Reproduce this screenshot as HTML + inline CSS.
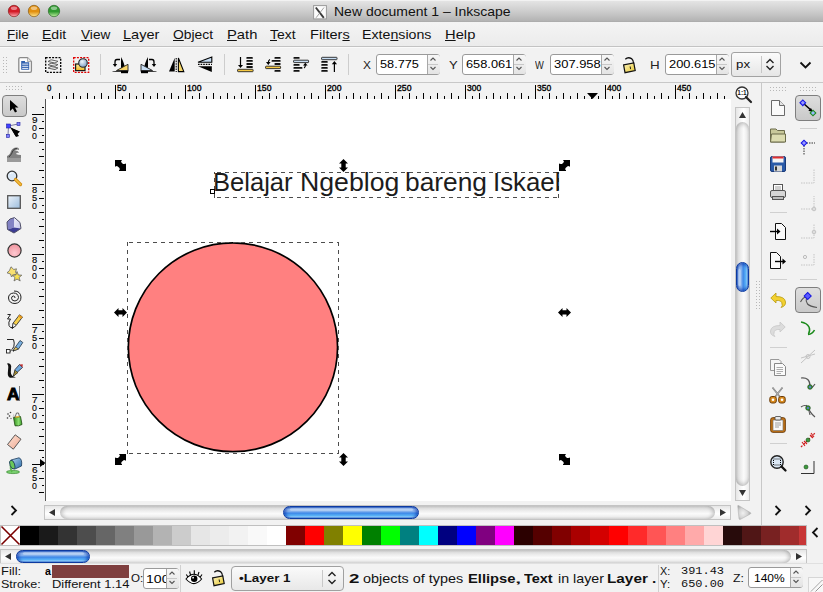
<!DOCTYPE html><html><head><meta charset="utf-8"><style>
html,body{margin:0;padding:0;}body{width:823px;height:592px;overflow:hidden;position:relative;background:#f2f2f2;font-family:"Liberation Sans",sans-serif;}
.t{position:absolute;white-space:pre;line-height:0;transform-origin:0 0;}
svg{overflow:visible}
</style></head><body>
<div style="position:absolute;left:0px;top:0px;width:823px;height:22px;background:linear-gradient(#e6e6e6 0%,#dadada 25%,#c8c8c8 60%,#b6b6b6 90%,#b0b0b0 100%);"></div>
<div style="position:absolute;left:0px;top:0px;width:823px;height:1px;background:#f2f2f2;"></div>
<div style="position:absolute;left:0px;top:21px;width:823px;height:1px;background:#adadad;"></div>
<svg style="position:absolute;left:7px;top:3.5px" width="14" height="14" viewBox="0 0 14 14"><defs><linearGradient id="gd41c28" x1="0" y1="0" x2="0" y2="1"><stop offset="0" stop-color="#d41c28"/><stop offset="0.55" stop-color="#d41c28"/><stop offset="1" stop-color="#ffb0b8"/></linearGradient></defs><circle cx="7" cy="7" r="5.7" fill="url(#gd41c28)" stroke="#8a1a1a" stroke-width="0.7"/><ellipse cx="7" cy="4.2" rx="3.2" ry="1.8" fill="#fff" opacity="0.45"/></svg>
<svg style="position:absolute;left:27px;top:3.5px" width="14" height="14" viewBox="0 0 14 14"><defs><linearGradient id="ge29010" x1="0" y1="0" x2="0" y2="1"><stop offset="0" stop-color="#e29010"/><stop offset="0.55" stop-color="#e29010"/><stop offset="1" stop-color="#ffe890"/></linearGradient></defs><circle cx="7" cy="7" r="5.7" fill="url(#ge29010)" stroke="#8a5a10" stroke-width="0.7"/><ellipse cx="7" cy="4.2" rx="3.2" ry="1.8" fill="#fff" opacity="0.45"/></svg>
<svg style="position:absolute;left:46.5px;top:3.5px" width="14" height="14" viewBox="0 0 14 14"><defs><linearGradient id="g2f9a2f" x1="0" y1="0" x2="0" y2="1"><stop offset="0" stop-color="#2f9a2f"/><stop offset="0.55" stop-color="#2f9a2f"/><stop offset="1" stop-color="#c0f0a0"/></linearGradient></defs><circle cx="7" cy="7" r="5.7" fill="url(#g2f9a2f)" stroke="#2a6a2a" stroke-width="0.7"/><ellipse cx="7" cy="4.2" rx="3.2" ry="1.8" fill="#fff" opacity="0.45"/></svg>
<svg style="position:absolute;left:313px;top:4.5px" width="14" height="14.5" viewBox="0 0 14 14.5"><rect x="0.6" y="0.6" width="12.8" height="13.3" fill="#fcfcfc" stroke="#9a9a9a" stroke-width="1"/><path d="M2.8 2.5 L10.8 12.8" stroke="#3a3a3a" stroke-width="1.9"/><path d="M11 2.5 L3 12.8" stroke="#8a8a8a" stroke-width="0.8"/></svg>
<div id="t0" class="t" style="left:333.97px;top:11.89px;font-size:13.6px;font-weight:400;color:#111;font-family:'Liberation Sans', sans-serif;transform:scaleX(1.0294);">New document 1 – Inkscape</div>
<div style="position:absolute;left:0px;top:22px;width:823px;height:25px;background:linear-gradient(#f4f4f4,#ebebeb);"></div>
<div style="position:absolute;left:0px;top:46px;width:823px;height:1px;background:#c3c3c3;"></div>
<div style="position:absolute;left:0px;top:47px;width:823px;height:1px;background:#fafafa;"></div>
<div id="t1" class="t" style="left:7.13px;top:34.93px;font-size:12.6px;font-weight:400;color:#111;font-family:'Liberation Sans', sans-serif;transform:scaleX(1.0720);"><u>F</u>ile</div>
<div id="t2" class="t" style="left:41.99px;top:34.93px;font-size:12.6px;font-weight:400;color:#111;font-family:'Liberation Sans', sans-serif;transform:scaleX(1.1122);"><u>E</u>dit</div>
<div id="t3" class="t" style="left:81.00px;top:34.93px;font-size:12.6px;font-weight:400;color:#111;font-family:'Liberation Sans', sans-serif;transform:scaleX(1.0815);"><u>V</u>iew</div>
<div id="t4" class="t" style="left:122.74px;top:34.93px;font-size:12.6px;font-weight:400;color:#111;font-family:'Liberation Sans', sans-serif;transform:scaleX(1.1570);"><u>L</u>ayer</div>
<div id="t5" class="t" style="left:172.95px;top:34.93px;font-size:12.6px;font-weight:400;color:#111;font-family:'Liberation Sans', sans-serif;transform:scaleX(1.0993);"><u>O</u>bject</div>
<div id="t6" class="t" style="left:226.73px;top:34.93px;font-size:12.6px;font-weight:400;color:#111;font-family:'Liberation Sans', sans-serif;transform:scaleX(1.1711);"><u>P</u>ath</div>
<div id="t7" class="t" style="left:270.32px;top:34.93px;font-size:12.6px;font-weight:400;color:#111;font-family:'Liberation Sans', sans-serif;transform:scaleX(1.1077);"><u>T</u>ext</div>
<div id="t8" class="t" style="left:309.84px;top:34.93px;font-size:12.6px;font-weight:400;color:#111;font-family:'Liberation Sans', sans-serif;transform:scaleX(1.1573);">Filter<u>s</u></div>
<div id="t9" class="t" style="left:361.97px;top:34.93px;font-size:12.6px;font-weight:400;color:#111;font-family:'Liberation Sans', sans-serif;transform:scaleX(1.1270);">Exte<u>n</u>sions</div>
<div id="t10" class="t" style="left:444.73px;top:34.93px;font-size:12.6px;font-weight:400;color:#111;font-family:'Liberation Sans', sans-serif;transform:scaleX(1.1711);"><u>H</u>elp</div>
<div style="position:absolute;left:0px;top:82px;width:823px;height:1px;background:#c8c8c8;"></div>
<svg style="position:absolute;left:3px;top:57px" width="6" height="18" viewBox="0 0 6 18"><rect x="0" y="0" width="1" height="1" fill="#b8b8b8"/><rect x="3" y="0" width="1" height="1" fill="#b8b8b8"/><rect x="0" y="3" width="1" height="1" fill="#b8b8b8"/><rect x="3" y="3" width="1" height="1" fill="#b8b8b8"/><rect x="0" y="6" width="1" height="1" fill="#b8b8b8"/><rect x="3" y="6" width="1" height="1" fill="#b8b8b8"/><rect x="0" y="9" width="1" height="1" fill="#b8b8b8"/><rect x="3" y="9" width="1" height="1" fill="#b8b8b8"/><rect x="0" y="12" width="1" height="1" fill="#b8b8b8"/><rect x="3" y="12" width="1" height="1" fill="#b8b8b8"/><rect x="0" y="15" width="1" height="1" fill="#b8b8b8"/><rect x="3" y="15" width="1" height="1" fill="#b8b8b8"/></svg>
<svg style="position:absolute;left:18px;top:57px" width="15" height="16" viewBox="0 0 15 16"><path d="M0.8 2 Q0.8 0.6 2.2 0.6 H9.5 L13.4 4.5 V14 Q13.4 15.4 12 15.4 H2.2 Q0.8 15.4 0.8 14 Z" fill="#fdfdfd" stroke="#8a8a8a" stroke-width="1.3"/><path d="M9.5 0.6 V4.5 H13.4" fill="#e2e2e2" stroke="#9a9a9a" stroke-width="0.8"/><path d="M3.2 4 H7 V5.2 H11.2 V12.7 H3.2 Z" fill="#2f5fae"/><path d="M4.2 7.1 H10.3 M4.2 9.3 H10.3 M4.2 11.4 H10.3" stroke="#fff" stroke-width="0.9"/></svg>
<svg style="position:absolute;left:45px;top:57px" width="17" height="16" viewBox="0 0 17 16"><rect x="0.7" y="0.7" width="15" height="14.6" fill="none" stroke="#000" stroke-width="1.3" stroke-dasharray="2,1.2"/><path d="M3 4.5 L6 2.8 L13 4.3 L10 6 Z" fill="#f4f4f4" stroke="#555" stroke-width="0.9"/><path d="M3 7.8 L6 6.1 L13 7.6 L10 9.3 Z" fill="#ececec" stroke="#555" stroke-width="0.9"/><path d="M3 11.1 L6 9.4 L13 10.9 L10 12.6 Z" fill="#e4e4e4" stroke="#555" stroke-width="0.9"/></svg>
<svg style="position:absolute;left:73px;top:57px" width="17" height="16" viewBox="0 0 17 16"><defs><linearGradient id="dsy" x1="0" y1="0" x2="0" y2="1"><stop offset="0" stop-color="#fff0a0"/><stop offset="1" stop-color="#f0b820"/></linearGradient><radialGradient id="dsb" cx="40%" cy="35%" r="65%"><stop offset="0" stop-color="#f0f6fc"/><stop offset="1" stop-color="#7f9fc4"/></radialGradient></defs><rect x="0.7" y="0.7" width="15" height="14.6" fill="none" stroke="#e00000" stroke-width="1.3" stroke-dasharray="2,1.2"/><rect x="2.6" y="7" width="9.4" height="6.6" fill="url(#dsy)" stroke="#1a1a1a" stroke-width="1.2"/><circle cx="10" cy="6" r="4.3" fill="url(#dsb)" stroke="#2a2a2a" stroke-width="1.1"/></svg>
<div style="position:absolute;left:100px;top:54px;width:1px;height:21px;background:#cdcdcd;"></div>
<svg style="position:absolute;left:112px;top:56px" width="17" height="18" viewBox="0 0 17 18"><path d="M9 1 L9 14 L13.5 14 Q12 6 9 1 Z" fill="#000"/><path d="M0.5 15.3 L16.3 14 L16.3 15.8 L0.5 15.8 Z" fill="#000"/><path d="M4.5 14.5 L16 8.3 L16 14.5 Z" fill="#f7d468" stroke="#222" stroke-width="0.9"/><rect x="9" y="15" width="7" height="2.2" fill="#000"/><path d="M8 3.5 H5 Q3 3.5 3 6 V8.5" fill="none" stroke="#000" stroke-width="1.3"/><path d="M0.8 8 L5.2 8 L3 11 Z" fill="#000"/></svg>
<svg style="position:absolute;left:140px;top:56px" width="17" height="18" viewBox="0 0 17 18"><path d="M8 1 L8 14 L3.5 14 Q5 6 8 1 Z" fill="#000"/><path d="M16.5 15.3 L0.7 14 L0.7 15.8 L16.5 15.8 Z" fill="#000"/><path d="M12.5 14.5 L1 8.3 L1 14.5 Z" fill="#c6dcf2" stroke="#222" stroke-width="0.9"/><rect x="1" y="15" width="7" height="2.2" fill="#000"/><path d="M9 3.5 H12 Q14 3.5 14 6 V8.5" fill="none" stroke="#000" stroke-width="1.3"/><path d="M11.8 8 L16.2 8 L14 11 Z" fill="#000"/></svg>
<svg style="position:absolute;left:168px;top:57px" width="17" height="16" viewBox="0 0 17 16"><path d="M1 14.6 L6.7 1 L6.7 14.6 Z" fill="#000"/><path d="M8.2 1 V15" stroke="#000" stroke-width="1.1" stroke-dasharray="1.6,1"/><path d="M10.4 1 L10.4 14.6 L15.8 14.6 Z" fill="#f5d66a" stroke="#000" stroke-width="1.1"/></svg>
<svg style="position:absolute;left:197px;top:56px" width="16" height="17" viewBox="0 0 16 17"><path d="M1 6.2 L14.8 1 L14.8 6.2 Z" fill="#c6dcf2" stroke="#000" stroke-width="1.1"/><path d="M1 8.4 H15" stroke="#000" stroke-width="1.2" stroke-dasharray="1.6,1"/><path d="M1 10.3 L14.8 10.3 L14.8 16 Z" fill="#000"/></svg>
<div style="position:absolute;left:224px;top:54px;width:1px;height:21px;background:#cdcdcd;"></div>
<svg style="position:absolute;left:237px;top:56px" width="17" height="17" viewBox="0 0 17 17"><rect x="9.3" y="1" width="6.6" height="1.8" rx="0.9" fill="#111"/><rect x="9.3" y="4" width="6.6" height="1.8" rx="0.9" fill="#111"/><rect x="9.3" y="7.1" width="6.6" height="1.8" rx="0.9" fill="#111"/><rect x="9.3" y="10.1" width="6.6" height="1.8" rx="0.9" fill="#111"/><rect x="0.6" y="13.3" width="15.5" height="2.4" rx="0.6" fill="#f5c842" stroke="#222" stroke-width="0.9"/><path d="M3.5 1 V10" stroke="#000" stroke-width="1.2"/><path d="M1 9 L6 9 L3.5 12 Z" fill="#000"/></svg>
<svg style="position:absolute;left:265px;top:56px" width="17" height="17" viewBox="0 0 17 17"><rect x="9.4" y="1" width="6.3" height="1.8" rx="0.9" fill="#111"/><rect x="6.5" y="4" width="9.2" height="1.8" rx="0.9" fill="#111"/><rect x="9.4" y="7.1" width="6.3" height="1.8" rx="0.9" fill="#111"/><rect x="9.4" y="14" width="6.3" height="1.8" rx="0.9" fill="#111"/><rect x="0.6" y="10.2" width="15" height="2.4" rx="0.6" fill="#f5c842" stroke="#222" stroke-width="0.9"/><path d="M5 3.5 Q3.5 4 3.3 6.5" fill="none" stroke="#000" stroke-width="1.2"/><path d="M1 6 L5.6 6 L3.3 9 Z" fill="#000"/></svg>
<svg style="position:absolute;left:293px;top:56px" width="17" height="17" viewBox="0 0 17 17"><rect x="0.4" y="1" width="6.3" height="1.8" rx="0.9" fill="#111"/><rect x="0.4" y="8" width="6.3" height="1.8" rx="0.9" fill="#111"/><rect x="0.4" y="11" width="9.1" height="1.8" rx="0.9" fill="#111"/><rect x="0.4" y="14" width="6.3" height="1.8" rx="0.9" fill="#111"/><rect x="0.6" y="4.2" width="15" height="2.4" rx="0.6" fill="#c6dcf2" stroke="#222" stroke-width="0.9"/><path d="M11 12 Q12.5 11.5 12.3 9" fill="none" stroke="#000" stroke-width="1.2"/><path d="M10 9.5 L14.6 9.5 L12.3 6.8 Z" fill="#000"/></svg>
<svg style="position:absolute;left:321px;top:56px" width="17" height="17" viewBox="0 0 17 17"><rect x="0.2" y="5" width="6.6" height="1.8" rx="0.9" fill="#111"/><rect x="0.2" y="8" width="6.6" height="1.8" rx="0.9" fill="#111"/><rect x="0.2" y="11" width="6.6" height="1.8" rx="0.9" fill="#111"/><rect x="0.2" y="14" width="6.6" height="1.8" rx="0.9" fill="#111"/><rect x="0.6" y="1.3" width="15.4" height="2.4" rx="0.6" fill="#c6dcf2" stroke="#222" stroke-width="0.9"/><path d="M13.4 7 V16" stroke="#000" stroke-width="1.2"/><path d="M10.8 8.2 L16 8.2 L13.4 5 Z" fill="#000"/></svg>
<div style="position:absolute;left:348px;top:54px;width:1px;height:21px;background:#cdcdcd;"></div>
<div id="t11" class="t" style="left:362.73px;top:64.59px;font-size:11px;font-weight:400;color:#222;font-family:'Liberation Sans', sans-serif;transform:scaleX(1.0815);">X</div>
<div style="position:absolute;left:376px;top:54px;width:64px;height:21px;box-sizing:border-box;border:1px solid #9a9a9a;border-radius:3px;background:#fff;"></div>
<div style="position:absolute;left:427px;top:55px;width:12px;height:19px;background:linear-gradient(#f7f7f7,#e4e4e4);border-left:1px solid #a8a8a8;border-radius:0 2px 2px 0;"></div>
<div style="position:absolute;left:428px;top:64px;width:10px;height:1px;background:#c8c8c8;"></div>
<svg style="position:absolute;left:429px;top:57px" width="8" height="5" viewBox="0 0 8 5"><path d="M1.5 3.5 L4 1 L6.5 3.5" fill="none" stroke="#555" stroke-width="1.1"/></svg>
<svg style="position:absolute;left:429px;top:66px" width="8" height="5" viewBox="0 0 8 5"><path d="M1.5 1 L4 3.5 L6.5 1" fill="none" stroke="#555" stroke-width="1.1"/></svg>
<div style="position:absolute;left:377px;top:54px;width:50px;height:21px;overflow:hidden;">
<div id="t12" class="t" style="left:2.94px;top:10.48px;font-size:11.3px;font-weight:400;color:#000;font-family:'Liberation Sans', sans-serif;transform:scaleX(1.1254);">58.775</div>
</div>
<div id="t13" class="t" style="left:448.50px;top:64.59px;font-size:11px;font-weight:400;color:#222;font-family:'Liberation Sans', sans-serif;transform:scaleX(1.1852);">Y</div>
<div style="position:absolute;left:462px;top:54px;width:64px;height:21px;box-sizing:border-box;border:1px solid #9a9a9a;border-radius:3px;background:#fff;"></div>
<div style="position:absolute;left:513px;top:55px;width:12px;height:19px;background:linear-gradient(#f7f7f7,#e4e4e4);border-left:1px solid #a8a8a8;border-radius:0 2px 2px 0;"></div>
<div style="position:absolute;left:514px;top:64px;width:10px;height:1px;background:#c8c8c8;"></div>
<svg style="position:absolute;left:515px;top:57px" width="8" height="5" viewBox="0 0 8 5"><path d="M1.5 3.5 L4 1 L6.5 3.5" fill="none" stroke="#555" stroke-width="1.1"/></svg>
<svg style="position:absolute;left:515px;top:66px" width="8" height="5" viewBox="0 0 8 5"><path d="M1.5 1 L4 3.5 L6.5 1" fill="none" stroke="#555" stroke-width="1.1"/></svg>
<div style="position:absolute;left:463px;top:54px;width:50px;height:21px;overflow:hidden;">
<div id="t14" class="t" style="left:2.53px;top:10.48px;font-size:11.3px;font-weight:400;color:#000;font-family:'Liberation Sans', sans-serif;transform:scaleX(1.1321);">658.061</div>
</div>
<div id="t15" class="t" style="left:535.00px;top:64.59px;font-size:11px;font-weight:400;color:#222;font-family:'Liberation Sans', sans-serif;transform:scaleX(0.8488);">W</div>
<div style="position:absolute;left:550px;top:54px;width:64px;height:21px;box-sizing:border-box;border:1px solid #9a9a9a;border-radius:3px;background:#fff;"></div>
<div style="position:absolute;left:601px;top:55px;width:12px;height:19px;background:linear-gradient(#f7f7f7,#e4e4e4);border-left:1px solid #a8a8a8;border-radius:0 2px 2px 0;"></div>
<div style="position:absolute;left:602px;top:64px;width:10px;height:1px;background:#c8c8c8;"></div>
<svg style="position:absolute;left:603px;top:57px" width="8" height="5" viewBox="0 0 8 5"><path d="M1.5 3.5 L4 1 L6.5 3.5" fill="none" stroke="#555" stroke-width="1.1"/></svg>
<svg style="position:absolute;left:603px;top:66px" width="8" height="5" viewBox="0 0 8 5"><path d="M1.5 1 L4 3.5 L6.5 1" fill="none" stroke="#555" stroke-width="1.1"/></svg>
<div style="position:absolute;left:551px;top:54px;width:50px;height:21px;overflow:hidden;">
<div id="t16" class="t" style="left:2.83px;top:10.48px;font-size:11.3px;font-weight:400;color:#000;font-family:'Liberation Sans', sans-serif;transform:scaleX(1.1447);">307.958</div>
</div>
<svg style="position:absolute;left:622px;top:56px" width="15" height="18" viewBox="0 0 15 18"><path d="M3.3 3.2 Q6 0.6 9.5 2.6 Q11.7 4.5 11.6 7.6" fill="none" stroke="#111" stroke-width="1.3"/><path d="M1.6 8.9 L11.8 6.9 L13.2 14.6 L3 16.7 Z" fill="url(#lkg)" stroke="#111" stroke-width="1.2"/><path d="M7.6 10.6 L8.6 10.4 L9 13 L8.2 13.2 Z" fill="#111"/></svg>
<div id="t17" class="t" style="left:650.18px;top:64.59px;font-size:11px;font-weight:400;color:#222;font-family:'Liberation Sans', sans-serif;transform:scaleX(1.2167);">H</div>
<div style="position:absolute;left:665px;top:54px;width:64px;height:21px;box-sizing:border-box;border:1px solid #9a9a9a;border-radius:3px;background:#fff;"></div>
<div style="position:absolute;left:716px;top:55px;width:12px;height:19px;background:linear-gradient(#f7f7f7,#e4e4e4);border-left:1px solid #a8a8a8;border-radius:0 2px 2px 0;"></div>
<div style="position:absolute;left:717px;top:64px;width:10px;height:1px;background:#c8c8c8;"></div>
<svg style="position:absolute;left:718px;top:57px" width="8" height="5" viewBox="0 0 8 5"><path d="M1.5 3.5 L4 1 L6.5 3.5" fill="none" stroke="#555" stroke-width="1.1"/></svg>
<svg style="position:absolute;left:718px;top:66px" width="8" height="5" viewBox="0 0 8 5"><path d="M1.5 1 L4 3.5 L6.5 1" fill="none" stroke="#555" stroke-width="1.1"/></svg>
<div style="position:absolute;left:666px;top:54px;width:50px;height:21px;overflow:hidden;">
<div id="t18" class="t" style="left:2.93px;top:10.48px;font-size:11.3px;font-weight:400;color:#000;font-family:'Liberation Sans', sans-serif;transform:scaleX(1.1375);">200.615</div>
</div>
<div style="position:absolute;left:731px;top:52px;width:50px;height:25px;box-sizing:border-box;border:1px solid #a2a2a2;border-radius:3px;background:linear-gradient(#fbfbfb,#e6e6e6);"></div>
<div style="position:absolute;left:761px;top:56px;width:1px;height:17px;background:#c6c6c6;"></div>
<svg style="position:absolute;left:765px;top:58px" width="10" height="13" viewBox="0 0 10 13"><path d="M1.5 5 L5 1.5 L8.5 5 M1.5 8 L5 11.5 L8.5 8" fill="none" stroke="#222" stroke-width="1.4"/></svg>
<div id="t19" class="t" style="left:736.13px;top:63.62px;font-size:11.5px;font-weight:400;color:#111;font-family:'Liberation Sans', sans-serif;transform:scaleX(1.1556);">px</div>
<svg style="position:absolute;left:799px;top:61px" width="13" height="8" viewBox="0 0 13 8"><path d="M1.5 1.5 L6.5 6.5 L11.5 1.5" fill="none" stroke="#111" stroke-width="1.8"/></svg>
<svg style="position:absolute;left:0px;top:0px" width="823" height="592" viewBox="0 0 823 592"><rect x="52" y="96" width="1" height="3" fill="#000"/><rect x="59" y="93" width="1" height="6" fill="#000"/><rect x="66" y="96" width="1" height="3" fill="#000"/><rect x="73" y="93" width="1" height="6" fill="#000"/><rect x="80" y="96" width="1" height="3" fill="#000"/><rect x="87" y="93" width="1" height="6" fill="#000"/><rect x="94" y="96" width="1" height="3" fill="#000"/><rect x="101" y="93" width="1" height="6" fill="#000"/><rect x="108" y="96" width="1" height="3" fill="#000"/><rect x="115" y="85" width="1" height="14" fill="#000"/><rect x="122" y="96" width="1" height="3" fill="#000"/><rect x="129" y="93" width="1" height="6" fill="#000"/><rect x="136" y="96" width="1" height="3" fill="#000"/><rect x="143" y="93" width="1" height="6" fill="#000"/><rect x="150" y="96" width="1" height="3" fill="#000"/><rect x="157" y="93" width="1" height="6" fill="#000"/><rect x="164" y="96" width="1" height="3" fill="#000"/><rect x="171" y="93" width="1" height="6" fill="#000"/><rect x="178" y="96" width="1" height="3" fill="#000"/><rect x="185" y="85" width="1" height="14" fill="#000"/><rect x="192" y="96" width="1" height="3" fill="#000"/><rect x="199" y="93" width="1" height="6" fill="#000"/><rect x="206" y="96" width="1" height="3" fill="#000"/><rect x="213" y="93" width="1" height="6" fill="#000"/><rect x="220" y="96" width="1" height="3" fill="#000"/><rect x="227" y="93" width="1" height="6" fill="#000"/><rect x="234" y="96" width="1" height="3" fill="#000"/><rect x="241" y="93" width="1" height="6" fill="#000"/><rect x="248" y="96" width="1" height="3" fill="#000"/><rect x="255" y="85" width="1" height="14" fill="#000"/><rect x="262" y="96" width="1" height="3" fill="#000"/><rect x="269" y="93" width="1" height="6" fill="#000"/><rect x="276" y="96" width="1" height="3" fill="#000"/><rect x="283" y="93" width="1" height="6" fill="#000"/><rect x="290" y="96" width="1" height="3" fill="#000"/><rect x="297" y="93" width="1" height="6" fill="#000"/><rect x="304" y="96" width="1" height="3" fill="#000"/><rect x="311" y="93" width="1" height="6" fill="#000"/><rect x="318" y="96" width="1" height="3" fill="#000"/><rect x="325" y="85" width="1" height="14" fill="#000"/><rect x="332" y="96" width="1" height="3" fill="#000"/><rect x="339" y="93" width="1" height="6" fill="#000"/><rect x="346" y="96" width="1" height="3" fill="#000"/><rect x="353" y="93" width="1" height="6" fill="#000"/><rect x="360" y="96" width="1" height="3" fill="#000"/><rect x="367" y="93" width="1" height="6" fill="#000"/><rect x="374" y="96" width="1" height="3" fill="#000"/><rect x="381" y="93" width="1" height="6" fill="#000"/><rect x="388" y="96" width="1" height="3" fill="#000"/><rect x="395" y="85" width="1" height="14" fill="#000"/><rect x="402" y="96" width="1" height="3" fill="#000"/><rect x="409" y="93" width="1" height="6" fill="#000"/><rect x="416" y="96" width="1" height="3" fill="#000"/><rect x="423" y="93" width="1" height="6" fill="#000"/><rect x="430" y="96" width="1" height="3" fill="#000"/><rect x="437" y="93" width="1" height="6" fill="#000"/><rect x="444" y="96" width="1" height="3" fill="#000"/><rect x="451" y="93" width="1" height="6" fill="#000"/><rect x="458" y="96" width="1" height="3" fill="#000"/><rect x="465" y="85" width="1" height="14" fill="#000"/><rect x="472" y="96" width="1" height="3" fill="#000"/><rect x="479" y="93" width="1" height="6" fill="#000"/><rect x="486" y="96" width="1" height="3" fill="#000"/><rect x="493" y="93" width="1" height="6" fill="#000"/><rect x="500" y="96" width="1" height="3" fill="#000"/><rect x="507" y="93" width="1" height="6" fill="#000"/><rect x="514" y="96" width="1" height="3" fill="#000"/><rect x="521" y="93" width="1" height="6" fill="#000"/><rect x="528" y="96" width="1" height="3" fill="#000"/><rect x="535" y="85" width="1" height="14" fill="#000"/><rect x="542" y="96" width="1" height="3" fill="#000"/><rect x="549" y="93" width="1" height="6" fill="#000"/><rect x="556" y="96" width="1" height="3" fill="#000"/><rect x="563" y="93" width="1" height="6" fill="#000"/><rect x="570" y="96" width="1" height="3" fill="#000"/><rect x="577" y="93" width="1" height="6" fill="#000"/><rect x="584" y="96" width="1" height="3" fill="#000"/><rect x="591" y="93" width="1" height="6" fill="#000"/><rect x="598" y="96" width="1" height="3" fill="#000"/><rect x="605" y="85" width="1" height="14" fill="#000"/><rect x="612" y="96" width="1" height="3" fill="#000"/><rect x="619" y="93" width="1" height="6" fill="#000"/><rect x="626" y="96" width="1" height="3" fill="#000"/><rect x="633" y="93" width="1" height="6" fill="#000"/><rect x="640" y="96" width="1" height="3" fill="#000"/><rect x="647" y="93" width="1" height="6" fill="#000"/><rect x="654" y="96" width="1" height="3" fill="#000"/><rect x="661" y="93" width="1" height="6" fill="#000"/><rect x="668" y="96" width="1" height="3" fill="#000"/><rect x="675" y="85" width="1" height="14" fill="#000"/><rect x="682" y="96" width="1" height="3" fill="#000"/><rect x="689" y="93" width="1" height="6" fill="#000"/><rect x="696" y="96" width="1" height="3" fill="#000"/><rect x="703" y="93" width="1" height="6" fill="#000"/><rect x="710" y="96" width="1" height="3" fill="#000"/><rect x="717" y="93" width="1" height="6" fill="#000"/><rect x="724" y="96" width="1" height="3" fill="#000"/></svg>
<div id="t20" class="t" style="left:47.47px;top:88.09px;font-size:8.4px;font-weight:400;color:#000;font-family:'Liberation Sans', sans-serif;transform:scaleX(0.9250);-webkit-text-stroke:0.35px #000;">0</div>
<div id="t21" class="t" style="left:117.19px;top:88.09px;font-size:8.4px;font-weight:400;color:#000;font-family:'Liberation Sans', sans-serif;transform:scaleX(1.0235);-webkit-text-stroke:0.35px #000;">50</div>
<div id="t22" class="t" style="left:187.18px;top:88.09px;font-size:8.4px;font-weight:400;color:#000;font-family:'Liberation Sans', sans-serif;transform:scaleX(1.0340);-webkit-text-stroke:0.35px #000;">100</div>
<div id="t23" class="t" style="left:257.18px;top:88.09px;font-size:8.4px;font-weight:400;color:#000;font-family:'Liberation Sans', sans-serif;transform:scaleX(1.0340);-webkit-text-stroke:0.35px #000;">150</div>
<div id="t24" class="t" style="left:327.18px;top:88.09px;font-size:8.4px;font-weight:400;color:#000;font-family:'Liberation Sans', sans-serif;transform:scaleX(1.0340);-webkit-text-stroke:0.35px #000;">200</div>
<div id="t25" class="t" style="left:397.18px;top:88.09px;font-size:8.4px;font-weight:400;color:#000;font-family:'Liberation Sans', sans-serif;transform:scaleX(1.0340);-webkit-text-stroke:0.35px #000;">250</div>
<div id="t26" class="t" style="left:467.45px;top:88.09px;font-size:8.4px;font-weight:400;color:#000;font-family:'Liberation Sans', sans-serif;transform:scaleX(1.0148);-webkit-text-stroke:0.35px #000;">300</div>
<div id="t27" class="t" style="left:537.45px;top:88.09px;font-size:8.4px;font-weight:400;color:#000;font-family:'Liberation Sans', sans-serif;transform:scaleX(1.0148);-webkit-text-stroke:0.35px #000;">350</div>
<div id="t28" class="t" style="left:607.45px;top:88.09px;font-size:8.4px;font-weight:400;color:#000;font-family:'Liberation Sans', sans-serif;transform:scaleX(1.0148);-webkit-text-stroke:0.35px #000;">400</div>
<div id="t29" class="t" style="left:677.45px;top:88.09px;font-size:8.4px;font-weight:400;color:#000;font-family:'Liberation Sans', sans-serif;transform:scaleX(1.0148);-webkit-text-stroke:0.35px #000;">450</div>
<svg style="position:absolute;left:587px;top:93px" width="12" height="6" viewBox="0 0 12 6"><path d="M0 0 H11 L5.5 6 Z" fill="#000"/></svg>
<svg style="position:absolute;left:0px;top:0px" width="823" height="592" viewBox="0 0 823 592"><rect x="45" y="99" width="1" height="402" fill="#555"/><rect x="42" y="107" width="2" height="1" fill="#000"/><rect x="32" y="114" width="12" height="1" fill="#000"/><rect x="42" y="121" width="2" height="1" fill="#000"/><rect x="39" y="128" width="5" height="1" fill="#000"/><rect x="42" y="135" width="2" height="1" fill="#000"/><rect x="39" y="142" width="5" height="1" fill="#000"/><rect x="42" y="149" width="2" height="1" fill="#000"/><rect x="39" y="156" width="5" height="1" fill="#000"/><rect x="42" y="163" width="2" height="1" fill="#000"/><rect x="39" y="170" width="5" height="1" fill="#000"/><rect x="42" y="177" width="2" height="1" fill="#000"/><rect x="32" y="184" width="12" height="1" fill="#000"/><rect x="42" y="191" width="2" height="1" fill="#000"/><rect x="39" y="198" width="5" height="1" fill="#000"/><rect x="42" y="205" width="2" height="1" fill="#000"/><rect x="39" y="212" width="5" height="1" fill="#000"/><rect x="42" y="219" width="2" height="1" fill="#000"/><rect x="39" y="226" width="5" height="1" fill="#000"/><rect x="42" y="233" width="2" height="1" fill="#000"/><rect x="39" y="240" width="5" height="1" fill="#000"/><rect x="42" y="247" width="2" height="1" fill="#000"/><rect x="32" y="254" width="12" height="1" fill="#000"/><rect x="42" y="261" width="2" height="1" fill="#000"/><rect x="39" y="268" width="5" height="1" fill="#000"/><rect x="42" y="275" width="2" height="1" fill="#000"/><rect x="39" y="282" width="5" height="1" fill="#000"/><rect x="42" y="289" width="2" height="1" fill="#000"/><rect x="39" y="296" width="5" height="1" fill="#000"/><rect x="42" y="303" width="2" height="1" fill="#000"/><rect x="39" y="310" width="5" height="1" fill="#000"/><rect x="42" y="317" width="2" height="1" fill="#000"/><rect x="32" y="324" width="12" height="1" fill="#000"/><rect x="42" y="331" width="2" height="1" fill="#000"/><rect x="39" y="338" width="5" height="1" fill="#000"/><rect x="42" y="345" width="2" height="1" fill="#000"/><rect x="39" y="352" width="5" height="1" fill="#000"/><rect x="42" y="359" width="2" height="1" fill="#000"/><rect x="39" y="366" width="5" height="1" fill="#000"/><rect x="42" y="373" width="2" height="1" fill="#000"/><rect x="39" y="380" width="5" height="1" fill="#000"/><rect x="42" y="387" width="2" height="1" fill="#000"/><rect x="32" y="394" width="12" height="1" fill="#000"/><rect x="42" y="401" width="2" height="1" fill="#000"/><rect x="39" y="408" width="5" height="1" fill="#000"/><rect x="42" y="415" width="2" height="1" fill="#000"/><rect x="39" y="422" width="5" height="1" fill="#000"/><rect x="42" y="429" width="2" height="1" fill="#000"/><rect x="39" y="436" width="5" height="1" fill="#000"/><rect x="42" y="443" width="2" height="1" fill="#000"/><rect x="39" y="450" width="5" height="1" fill="#000"/><rect x="42" y="457" width="2" height="1" fill="#000"/><rect x="32" y="464" width="12" height="1" fill="#000"/><rect x="42" y="471" width="2" height="1" fill="#000"/><rect x="39" y="478" width="5" height="1" fill="#000"/><rect x="42" y="485" width="2" height="1" fill="#000"/><rect x="39" y="492" width="5" height="1" fill="#000"/></svg>
<div id="t30" class="t" style="left:32.01px;top:120.15px;font-size:8.5px;font-weight:400;color:#000;font-family:'Liberation Sans', sans-serif;transform:scaleX(1.1733);-webkit-text-stroke:0.12px #000;">9</div>
<div id="t31" class="t" style="left:32.34px;top:128.05px;font-size:8.5px;font-weight:400;color:#000;font-family:'Liberation Sans', sans-serif;transform:scaleX(1.0353);-webkit-text-stroke:0.12px #000;">0</div>
<div id="t32" class="t" style="left:32.34px;top:135.95px;font-size:8.5px;font-weight:400;color:#000;font-family:'Liberation Sans', sans-serif;transform:scaleX(1.0353);-webkit-text-stroke:0.12px #000;">0</div>
<div id="t33" class="t" style="left:32.33px;top:190.15px;font-size:8.5px;font-weight:400;color:#000;font-family:'Liberation Sans', sans-serif;transform:scaleX(1.1000);-webkit-text-stroke:0.12px #000;">8</div>
<div id="t34" class="t" style="left:32.05px;top:198.05px;font-size:8.5px;font-weight:400;color:#000;font-family:'Liberation Sans', sans-serif;transform:scaleX(1.1000);-webkit-text-stroke:0.12px #000;">5</div>
<div id="t35" class="t" style="left:32.34px;top:205.95px;font-size:8.5px;font-weight:400;color:#000;font-family:'Liberation Sans', sans-serif;transform:scaleX(1.0353);-webkit-text-stroke:0.12px #000;">0</div>
<div id="t36" class="t" style="left:32.33px;top:260.15px;font-size:8.5px;font-weight:400;color:#000;font-family:'Liberation Sans', sans-serif;transform:scaleX(1.1000);-webkit-text-stroke:0.12px #000;">8</div>
<div id="t37" class="t" style="left:32.34px;top:268.05px;font-size:8.5px;font-weight:400;color:#000;font-family:'Liberation Sans', sans-serif;transform:scaleX(1.0353);-webkit-text-stroke:0.12px #000;">0</div>
<div id="t38" class="t" style="left:32.34px;top:275.95px;font-size:8.5px;font-weight:400;color:#000;font-family:'Liberation Sans', sans-serif;transform:scaleX(1.0353);-webkit-text-stroke:0.12px #000;">0</div>
<div id="t39" class="t" style="left:32.01px;top:330.15px;font-size:8.5px;font-weight:400;color:#000;font-family:'Liberation Sans', sans-serif;transform:scaleX(1.1733);-webkit-text-stroke:0.12px #000;">7</div>
<div id="t40" class="t" style="left:32.05px;top:338.05px;font-size:8.5px;font-weight:400;color:#000;font-family:'Liberation Sans', sans-serif;transform:scaleX(1.1000);-webkit-text-stroke:0.12px #000;">5</div>
<div id="t41" class="t" style="left:32.34px;top:345.95px;font-size:8.5px;font-weight:400;color:#000;font-family:'Liberation Sans', sans-serif;transform:scaleX(1.0353);-webkit-text-stroke:0.12px #000;">0</div>
<div id="t42" class="t" style="left:32.01px;top:400.15px;font-size:8.5px;font-weight:400;color:#000;font-family:'Liberation Sans', sans-serif;transform:scaleX(1.1733);-webkit-text-stroke:0.12px #000;">7</div>
<div id="t43" class="t" style="left:32.34px;top:408.05px;font-size:8.5px;font-weight:400;color:#000;font-family:'Liberation Sans', sans-serif;transform:scaleX(1.0353);-webkit-text-stroke:0.12px #000;">0</div>
<div id="t44" class="t" style="left:32.34px;top:415.95px;font-size:8.5px;font-weight:400;color:#000;font-family:'Liberation Sans', sans-serif;transform:scaleX(1.0353);-webkit-text-stroke:0.12px #000;">0</div>
<div id="t45" class="t" style="left:32.01px;top:470.15px;font-size:8.5px;font-weight:400;color:#000;font-family:'Liberation Sans', sans-serif;transform:scaleX(1.1733);-webkit-text-stroke:0.12px #000;">6</div>
<div id="t46" class="t" style="left:32.05px;top:478.05px;font-size:8.5px;font-weight:400;color:#000;font-family:'Liberation Sans', sans-serif;transform:scaleX(1.1000);-webkit-text-stroke:0.12px #000;">5</div>
<div id="t47" class="t" style="left:32.34px;top:485.95px;font-size:8.5px;font-weight:400;color:#000;font-family:'Liberation Sans', sans-serif;transform:scaleX(1.0353);-webkit-text-stroke:0.12px #000;">0</div>
<svg style="position:absolute;left:40px;top:459px" width="6" height="8" viewBox="0 0 6 8"><path d="M0 0 L5.5 4 L0 8 Z" fill="#000"/></svg>
<svg style="position:absolute;left:6px;top:86px" width="18" height="6" viewBox="0 0 18 6"><rect x="0" y="0" width="1" height="1" fill="#b8b8b8"/><rect x="3" y="0" width="1" height="1" fill="#b8b8b8"/><rect x="6" y="0" width="1" height="1" fill="#b8b8b8"/><rect x="9" y="0" width="1" height="1" fill="#b8b8b8"/><rect x="12" y="0" width="1" height="1" fill="#b8b8b8"/><rect x="15" y="0" width="1" height="1" fill="#b8b8b8"/><rect x="0" y="3" width="1" height="1" fill="#b8b8b8"/><rect x="3" y="3" width="1" height="1" fill="#b8b8b8"/><rect x="6" y="3" width="1" height="1" fill="#b8b8b8"/><rect x="9" y="3" width="1" height="1" fill="#b8b8b8"/><rect x="12" y="3" width="1" height="1" fill="#b8b8b8"/><rect x="15" y="3" width="1" height="1" fill="#b8b8b8"/></svg>
<div style="position:absolute;left:2px;top:95px;width:25px;height:22px;box-sizing:border-box;border:1px solid #7e7e7e;border-radius:4px;background:linear-gradient(#dedede,#c9c9c9);"></div>
<svg style="position:absolute;left:9px;top:100px" width="12" height="13" viewBox="0 0 12 13"><path d="M1 0 L1 11 L3.8 8.5 L6 12.5 L8 11.5 L6 7.5 L9.5 7.5 Z" fill="#000"/></svg>
<svg style="position:absolute;left:6px;top:122px" width="16" height="17" viewBox="0 0 16 17"><path d="M2.5 4 L12 2 M2.5 4 L2 13" stroke="#7a7aa0" stroke-width="1" fill="none"/><rect x="0.5" y="2" width="4" height="4" fill="#4040ff" stroke="#2020a0" stroke-width="0.6"/><rect x="11" y="0.5" width="3" height="3" fill="#8080ff" stroke="#2020a0" stroke-width="0.6"/><rect x="0.5" y="12.5" width="3" height="3" fill="#8080ff" stroke="#2020a0" stroke-width="0.6"/><path d="M4 5 L13 9.5 L10.5 10.5 L13 14 L10 15 Z" fill="#000"/><path d="M5 6 L9.5 14 L14 9.5 Z" fill="#000"/></svg>
<svg style="position:absolute;left:6px;top:146px" width="16" height="16" viewBox="0 0 16 16"><path d="M1 16 L1 10 Q4 9 5 5 Q7 1 11 1.5 Q13.5 2 13 4 Q10.5 2.5 9 5 Q12 4 13 7 Q11 6 10 8 Q12 9 15 9 L15 16 Z" fill="#808080"/><path d="M3 11 Q6 8 7 4.5 Q9 2 11 2.5" stroke="#333" fill="none" stroke-width="0.9"/><rect x="1" y="12" width="14" height="4" fill="#9a9a9a"/></svg>
<svg style="position:absolute;left:6px;top:170px" width="16" height="16" viewBox="0 0 16 16"><circle cx="6" cy="6" r="4.8" fill="#dbe8f5" stroke="#333" stroke-width="1.3"/><path d="M4 4 A2.5 2.5 0 0 1 7 3" stroke="#fff" stroke-width="1" fill="none"/><path d="M9.5 9.5 L14.5 14.5" stroke="#d08a10" stroke-width="3.2" stroke-linecap="round"/><path d="M9.5 9.5 L14.5 14.5" stroke="#f5c040" stroke-width="1.6" stroke-linecap="round"/></svg>
<svg style="position:absolute;left:7px;top:195px" width="14" height="14" viewBox="0 0 14 14"><defs><linearGradient id="rg" x1="0" y1="0" x2="1" y2="1"><stop offset="0" stop-color="#eef4fb"/><stop offset="1" stop-color="#9bbcdc"/></linearGradient></defs><rect x="0.7" y="0.7" width="12.6" height="12.6" fill="url(#rg)" stroke="#555" stroke-width="1.3"/></svg>
<svg style="position:absolute;left:6px;top:217px" width="17" height="17" viewBox="0 0 17 17"><defs><linearGradient id="bxl" x1="0" y1="0" x2="1" y2="1"><stop offset="0" stop-color="#eeeefa"/><stop offset="1" stop-color="#c4c4ea"/></linearGradient></defs><path d="M4 2 L8.5 0.6 L8 10.5 L1.5 12.5 L1 5 Z" fill="#8282c4"/><path d="M8.5 0.6 L14 5.5 L15 11.5 L8 10.5 Z" fill="url(#bxl)"/><path d="M8 10.5 L15 11.5 L8 16 L1.5 12.5 Z" fill="#3c3c94"/><path d="M8.5 0.6 L14 5.5 L15 11.5 L8 16 L1.5 12.5 L1 5 L4 2 Z" fill="none" stroke="#50506a" stroke-width="1"/></svg>
<svg style="position:absolute;left:6.5px;top:243px" width="15" height="15" viewBox="0 0 15 15"><defs><radialGradient id="cg" cx="50%" cy="70%" r="60%"><stop offset="0" stop-color="#ffc8d0"/><stop offset="1" stop-color="#f09aa4"/></radialGradient></defs><circle cx="7.5" cy="7.5" r="6.6" fill="url(#cg)" stroke="#333" stroke-width="1.2"/></svg>
<svg style="position:absolute;left:6px;top:266px" width="16" height="16" viewBox="0 0 16 16"><path d="M5 0.8 L7.8 3.5 L10.5 2.8 L9.5 6 L11 8.5 L7.5 8.8 L5.5 11 L4.5 8 L1 6.8 L3.5 4.5 Z" fill="#f8e070" stroke="#666" stroke-width="0.8"/><path d="M11 5.5 L12.3 9 L15.8 9.2 L13 11.5 L14.2 15 L11 13 L8 15 L9 11.5 L6.3 9.2 L9.8 9 Z" fill="#f8e050" stroke="#666" stroke-width="0.8"/></svg>
<svg style="position:absolute;left:6px;top:290px" width="16" height="15" viewBox="0 0 16 15"><path d="M9 8 Q9 6 7.5 6 Q5.5 6.2 5.5 8.2 Q5.7 11 9 11 Q12.5 10.5 12.5 7.5 Q12 3 7.5 3 Q2.5 3.5 2.5 8 Q3 13.5 9 13.5 Q15 13 15 7 Q14.5 1 8 1" fill="none" stroke="#222" stroke-width="1"/></svg>
<svg style="position:absolute;left:6px;top:313px" width="17" height="17" viewBox="0 0 17 17"><path d="M1.5 1.5 H4.5 L1.5 6 H4.5 Q2 9 3 12.5 Q4 15.5 7 14.5" fill="none" stroke="#222" stroke-width="1"/><path d="M6.2 15.5 L7.2 10 L13.5 1.8 L16.5 4 L10.2 12.3 Z" fill="#f7d04a" stroke="#333" stroke-width="0.9"/><path d="M13.5 1.8 L16.5 4 L15.2 5.7 L12.2 3.5 Z" fill="#e89a20"/><path d="M6.2 15.5 L7.2 10 L10.2 12.3 Z" fill="#fff" stroke="#333" stroke-width="0.8"/><path d="M6.2 15.5 L6.6 13.3 L7.9 14.2 Z" fill="#000"/></svg>
<svg style="position:absolute;left:6px;top:338px" width="17" height="17" viewBox="0 0 17 17"><path d="M1 1.5 H7.5 Q10 9 4 13.5" fill="none" stroke="#222" stroke-width="1"/><path d="M4 13.5 H1" stroke="#222" stroke-width="1"/><rect x="0.5" y="11.5" width="3.5" height="3.5" fill="#fff" stroke="#222" stroke-width="0.9"/><path d="M7 13 L9.5 9 L14 2.5 L16.8 4.5 L12.5 11 Z" fill="#7ab0e0" stroke="#234" stroke-width="0.8"/><path d="M7 13 L9.5 9 L12.5 11 Z" fill="#f0d060" stroke="#333" stroke-width="0.7"/><circle cx="7.3" cy="12.6" r="0.8" fill="#222"/></svg>
<svg style="position:absolute;left:6px;top:362px" width="17" height="17" viewBox="0 0 17 17"><path d="M1 1.5 Q4.5 0.5 5.2 4 L4.8 10 Q4.6 14 10 15.5 L4 15.8 Q1.6 14.6 1.8 11 L2.3 5 Q2.4 3 1 1.5 Z" fill="#111"/><path d="M7.5 14 L9 7.5 L13.5 2.5 L16.5 5.5 L11.5 10 Z" fill="#6fa8dc" stroke="#223" stroke-width="0.8"/><path d="M7.5 14 L9 8.5 L12 10.5 Z" fill="#f5d040" stroke="#222" stroke-width="0.7"/><path d="M13.5 2.5 L16.5 5.5 L16.8 2.2 Z" fill="#c03030"/><circle cx="9.9" cy="10.9" r="0.7" fill="#222"/></svg>
<div id="t48" class="t" style="left:6.68px;top:394.28px;font-size:16.5px;font-weight:700;color:#000;font-family:'Liberation Sans', sans-serif;transform:scaleX(1.0455);-webkit-text-stroke:0.9px #000;">A</div>
<div style="position:absolute;left:19px;top:386px;width:1px;height:15px;background:#777;"></div>
<svg style="position:absolute;left:6px;top:411px" width="17" height="16" viewBox="0 0 17 16"><circle cx="2" cy="3" r="0.8" fill="#333"/><circle cx="4.5" cy="1.5" r="0.8" fill="#333"/><circle cx="3.5" cy="5" r="0.8" fill="#333"/><circle cx="1.5" cy="7" r="0.8" fill="#333"/><circle cx="5" cy="7.5" r="0.7" fill="#666"/><path d="M7.5 2.5 L9 6 L6.5 6.5 Z" fill="#ccc"/><defs><linearGradient id="spg" x1="0" y1="0" x2="1" y2="0"><stop offset="0" stop-color="#2e8a1a"/><stop offset="0.6" stop-color="#8ae070"/><stop offset="1" stop-color="#3a9a28"/></linearGradient></defs><path d="M7.5 6.5 L14.5 5.5 L16 13.5 Q12.5 15.5 9 14.8 Z" fill="url(#spg)" stroke="#1e4a10" stroke-width="0.8"/><path d="M9 6.3 L10.5 2 L12.5 2 L13.5 5.8 Z" fill="#f6f6f6" stroke="#333" stroke-width="0.7"/><path d="M9.3 5.5 L13.3 5 L13.5 6.3 L9.3 6.8 Z" fill="#f0c030"/></svg>
<svg style="position:absolute;left:6px;top:434px" width="16" height="17" viewBox="0 0 16 17"><defs><linearGradient id="erg" x1="0" y1="0" x2="1" y2="1"><stop offset="0" stop-color="#fde4d8"/><stop offset="1" stop-color="#f0a890"/></linearGradient></defs><path d="M1.5 10.5 L9.2 0.8 L15 5.2 L7.3 15.2 Z" fill="url(#erg)" stroke="#4a4a4a" stroke-width="0.9"/></svg>
<svg style="position:absolute;left:5px;top:457px" width="18" height="17" viewBox="0 0 18 17"><defs><linearGradient id="bkg" x1="0" y1="0" x2="1" y2="1"><stop offset="0" stop-color="#b0d4f0"/><stop offset="1" stop-color="#2a6aa8"/></linearGradient></defs><ellipse cx="8" cy="15" rx="6.6" ry="1.6" fill="#7ad070" stroke="#3a8a30" stroke-width="0.7"/><path d="M5.5 8 Q5 12 7 15" stroke="#5ab84a" stroke-width="1.6" fill="none"/><path d="M6 3 L14 0.8 Q17.5 2 16.5 9 L9.5 12.2 Z" fill="url(#bkg)" stroke="#1a3a5a" stroke-width="0.8"/><ellipse cx="7.3" cy="7.6" rx="2.3" ry="4.6" transform="rotate(-20 7.3 7.6)" fill="#6ac85a" stroke="#1a3a5a" stroke-width="0.8"/></svg>
<div style="position:absolute;left:46px;top:99px;width:685px;height:402px;background:#fff;"></div>
<svg style="position:absolute;left:0px;top:0px" width="823" height="592" viewBox="0 0 823 592"><ellipse cx="232.95" cy="347.3" rx="104.6" ry="104.4" fill="#ff8080" stroke="#000" stroke-width="1.7"/><path d="M129 242.5H133M129 453.5H133M137 242.5H141M137 453.5H141M145 242.5H149M145 453.5H149M153 242.5H157M153 453.5H157M161 242.5H165M161 453.5H165M169 242.5H173M169 453.5H173M177 242.5H181M177 453.5H181M185 242.5H189M185 453.5H189M193 242.5H197M193 453.5H197M201 242.5H205M201 453.5H205M209 242.5H213M209 453.5H213M217 242.5H221M217 453.5H221M225 242.5H229M225 453.5H229M233 242.5H237M233 453.5H237M241 242.5H245M241 453.5H245M249 242.5H253M249 453.5H253M257 242.5H261M257 453.5H261M265 242.5H269M265 453.5H269M273 242.5H277M273 453.5H277M281 242.5H285M281 453.5H285M289 242.5H293M289 453.5H293M297 242.5H301M297 453.5H301M305 242.5H309M305 453.5H309M313 242.5H317M313 453.5H317M321 242.5H325M321 453.5H325M329 242.5H333M329 453.5H333M337 242.5H339M337 453.5H339M127.5 242V246M338.5 242V246M127.5 250V254M338.5 250V254M127.5 258V262M338.5 258V262M127.5 266V270M338.5 266V270M127.5 274V278M338.5 274V278M127.5 282V286M338.5 282V286M127.5 290V294M338.5 290V294M127.5 298V302M338.5 298V302M127.5 306V310M338.5 306V310M127.5 314V318M338.5 314V318M127.5 322V326M338.5 322V326M127.5 330V334M338.5 330V334M127.5 338V342M338.5 338V342M127.5 346V350M338.5 346V350M127.5 354V358M338.5 354V358M127.5 362V366M338.5 362V366M127.5 370V374M338.5 370V374M127.5 378V382M338.5 378V382M127.5 386V390M338.5 386V390M127.5 394V398M338.5 394V398M127.5 402V406M338.5 402V406M127.5 410V414M338.5 410V414M127.5 418V422M338.5 418V422M127.5 426V430M338.5 426V430M127.5 434V438M338.5 434V438M127.5 442V446M338.5 442V446M127.5 450V454M338.5 450V454" stroke="#4d4d4d" stroke-width="1" fill="none"/><path d="M217 172.5H221M217 197.5H221M225 172.5H229M225 197.5H229M233 172.5H237M233 197.5H237M241 172.5H245M241 197.5H245M249 172.5H253M249 197.5H253M257 172.5H261M257 197.5H261M265 172.5H269M265 197.5H269M273 172.5H277M273 197.5H277M281 172.5H285M281 197.5H285M289 172.5H293M289 197.5H293M297 172.5H301M297 197.5H301M305 172.5H309M305 197.5H309M313 172.5H317M313 197.5H317M321 172.5H325M321 197.5H325M329 172.5H333M329 197.5H333M337 172.5H341M337 197.5H341M345 172.5H349M345 197.5H349M353 172.5H357M353 197.5H357M361 172.5H365M361 197.5H365M369 172.5H373M369 197.5H373M377 172.5H381M377 197.5H381M385 172.5H389M385 197.5H389M393 172.5H397M393 197.5H397M401 172.5H405M401 197.5H405M409 172.5H413M409 197.5H413M417 172.5H421M417 197.5H421M425 172.5H429M425 197.5H429M433 172.5H437M433 197.5H437M441 172.5H445M441 197.5H445M449 172.5H453M449 197.5H453M457 172.5H461M457 197.5H461M465 172.5H469M465 197.5H469M473 172.5H477M473 197.5H477M481 172.5H485M481 197.5H485M489 172.5H493M489 197.5H493M497 172.5H501M497 197.5H501M505 172.5H509M505 197.5H509M513 172.5H517M513 197.5H517M521 172.5H525M521 197.5H525M529 172.5H533M529 197.5H533M537 172.5H541M537 197.5H541M545 172.5H549M545 197.5H549M553 172.5H557M553 197.5H557M214.5 172V174M558.5 172V174M214.5 178V182M558.5 178V182M214.5 186V190M558.5 186V190M214.5 194V198M558.5 194V198" stroke="#4d4d4d" stroke-width="1" fill="none"/><rect x="210.5" y="189.5" width="4" height="4" fill="#fff" stroke="#000" stroke-width="1"/><path transform="translate(115.0,160.0)" d="M0 0 L6.8 0 L6.8 0.5 L6 1.5 L6.5 2.5 L8 4 L9.5 4 L10.5 3.5 L11 4 L11 11 L4 11 L4 10.3 L4.8 9.5 L4.5 8 L3 6.8 L2 6 L1 6.3 L0 6.8 Z" fill="#000"/><path transform="translate(348.0,158.9) rotate(90)" d="M0 4.5 L4.5 0 L4.5 2.3 L8.5 2.3 L8.5 0 L13 4.5 L8.5 9 L8.5 6.7 L4.5 6.7 L4.5 9 Z" fill="#000"/><path transform="translate(570.0,160.0) scale(-1,1)" d="M0 0 L6.8 0 L6.8 0.5 L6 1.5 L6.5 2.5 L8 4 L9.5 4 L10.5 3.5 L11 4 L11 11 L4 11 L4 10.3 L4.8 9.5 L4.5 8 L3 6.8 L2 6 L1 6.3 L0 6.8 Z" fill="#000"/><path transform="translate(114.0,307.9)" d="M0 4.5 L4.5 0 L4.5 2.3 L8.5 2.3 L8.5 0 L13 4.5 L8.5 9 L8.5 6.7 L4.5 6.7 L4.5 9 Z" fill="#000"/><path transform="translate(558.0,307.9)" d="M0 4.5 L4.5 0 L4.5 2.3 L8.5 2.3 L8.5 0 L13 4.5 L8.5 9 L8.5 6.7 L4.5 6.7 L4.5 9 Z" fill="#000"/><path transform="translate(126.0,454.0) scale(-1,1)" d="M0 0 L6.8 0 L6.8 0.5 L6 1.5 L6.5 2.5 L8 4 L9.5 4 L10.5 3.5 L11 4 L11 11 L4 11 L4 10.3 L4.8 9.5 L4.5 8 L3 6.8 L2 6 L1 6.3 L0 6.8 Z" fill="#000"/><path transform="translate(348.0,453.0) rotate(90)" d="M0 4.5 L4.5 0 L4.5 2.3 L8.5 2.3 L8.5 0 L13 4.5 L8.5 9 L8.5 6.7 L4.5 6.7 L4.5 9 Z" fill="#000"/><path transform="translate(559.0,453.9)" d="M0 0 L6.8 0 L6.8 0.5 L6 1.5 L6.5 2.5 L8 4 L9.5 4 L10.5 3.5 L11 4 L11 11 L4 11 L4 10.3 L4.8 9.5 L4.5 8 L3 6.8 L2 6 L1 6.3 L0 6.8 Z" fill="#000"/></svg>
<div id="t49" class="t" style="left:212.79px;top:181.76px;font-size:25.5px;font-weight:400;color:#1c1c1c;font-family:'Liberation Sans', sans-serif;transform:scaleX(1.0026);">Belajar</div>
<div id="t50" class="t" style="left:299.81px;top:181.76px;font-size:25.5px;font-weight:400;color:#1c1c1c;font-family:'Liberation Sans', sans-serif;transform:scaleX(1.0455);">Ngeblog</div>
<div id="t51" class="t" style="left:405.49px;top:181.76px;font-size:25.5px;font-weight:400;color:#1c1c1c;font-family:'Liberation Sans', sans-serif;transform:scaleX(1.0329);">bareng</div>
<div id="t52" class="t" style="left:493.22px;top:181.76px;font-size:25.5px;font-weight:400;color:#1c1c1c;font-family:'Liberation Sans', sans-serif;transform:scaleX(1.0120);">Iskael</div>
<div style="position:absolute;left:735px;top:107px;width:15px;height:394px;box-sizing:border-box;border:1px solid #c4c4c4;background:linear-gradient(90deg,#e6e6e6,#f8f8f8 40%,#ffffff 60%,#ededed);"></div>
<div style="position:absolute;left:736px;top:122px;width:13px;height:364px;border-radius:7.5px;background:linear-gradient(90deg,#cfcfcf,#ececec 35%,#fbfbfb 60%,#e2e2e2);box-shadow:inset 0 4px 4px -2px rgba(0,0,0,0.22), inset 0 -4px 4px -2px rgba(0,0,0,0.22);"></div>
<svg style="position:absolute;left:739.0px;top:112px" width="7" height="6" viewBox="0 0 7 6"><path d="M3.5 0 L7 6 L0 6 Z" fill="#333"/></svg>
<svg style="position:absolute;left:739.0px;top:490px" width="7" height="6" viewBox="0 0 7 6"><path d="M3.5 6 L7 0 L0 0 Z" fill="#333"/></svg>
<div style="position:absolute;left:736px;top:262px;width:13px;height:30px;box-sizing:border-box;border:1px solid #0d3aa0;border-radius:6.5px;background:linear-gradient(90deg,#3a6cc8 0%,#9cc0f0 20%,#84b0ec 40%,#3e88e8 56%,#58b0f6 78%,#9ad8ff 92%,#3c70cc 100%);box-shadow:inset 0 3px 3px -1px rgba(0,40,160,0.55), inset 0 -3px 3px -1px rgba(0,40,160,0.55);"></div>
<div style="position:absolute;left:738px;top:268.5px;width:3px;height:17px;background:rgba(255,255,255,0.28);border-radius:2px;"></div>
<div style="position:absolute;left:44px;top:505px;width:687px;height:15px;box-sizing:border-box;border:1px solid #c4c4c4;background:linear-gradient(#e6e6e6,#f8f8f8 40%,#ffffff 60%,#ededed);"></div>
<div style="position:absolute;left:60px;top:506px;width:655px;height:13px;border-radius:7.5px;background:linear-gradient(#cfcfcf,#ececec 35%,#fbfbfb 60%,#e2e2e2);box-shadow:inset 4px 0 4px -2px rgba(0,0,0,0.22), inset -4px 0 4px -2px rgba(0,0,0,0.22);"></div>
<svg style="position:absolute;left:49px;top:509.0px" width="6" height="7" viewBox="0 0 6 7"><path d="M0 3.5 L6 0 L6 7 Z" fill="#333"/></svg>
<svg style="position:absolute;left:720px;top:509.0px" width="6" height="7" viewBox="0 0 6 7"><path d="M6 3.5 L0 0 L0 7 Z" fill="#333"/></svg>
<div style="position:absolute;left:283px;top:506px;width:136px;height:13px;box-sizing:border-box;border:1px solid #0d3aa0;border-radius:6.5px;background:linear-gradient(#3a6cc8 0%,#9cc0f0 20%,#84b0ec 40%,#3e88e8 56%,#58b0f6 78%,#9ad8ff 92%,#3c70cc 100%);box-shadow:inset 3px 0 3px -1px rgba(0,40,160,0.55), inset -3px 0 3px -1px rgba(0,40,160,0.55);"></div>
<div style="position:absolute;left:289.5px;top:508px;width:123px;height:3px;background:rgba(255,255,255,0.28);border-radius:2px;"></div>
<svg style="position:absolute;left:735px;top:86px" width="18" height="17" viewBox="0 0 18 17"><circle cx="7" cy="7" r="6" fill="#fff" stroke="#333" stroke-width="1.3"/><path d="M11 11 L16 16" stroke="#222" stroke-width="2.2" stroke-linecap="round"/><text x="7" y="9.3" font-size="6.5" font-weight="700" text-anchor="middle" font-family="Liberation Sans" fill="#222">1:1</text></svg>
<svg style="position:absolute;left:736px;top:504px" width="16" height="17" viewBox="0 0 16 17"><defs><radialGradient id="cmg" cx="40%" cy="55%" r="70%"><stop offset="0" stop-color="#f0f0f0"/><stop offset="0.5" stop-color="#d2d2d2"/><stop offset="1" stop-color="#8e9090"/></radialGradient></defs><path d="M2.5 1.5 Q1.5 1 1.8 2.5 L3 14.5 Q3.3 16 4.5 15.3 L14.3 10 Q15.3 9.3 14.3 8.6 Z" fill="url(#cmg)" stroke="#b4b4b4" stroke-width="0.6"/></svg>
<svg style="position:absolute;left:10px;top:505px" width="8" height="11" viewBox="0 0 8 11"><path d="M1.5 1 L6 5.5 L1.5 10" fill="none" stroke="#111" stroke-width="1.8"/></svg>
<svg style="position:absolute;left:774px;top:505px" width="8" height="11" viewBox="0 0 8 11"><path d="M1.5 1 L6 5.5 L1.5 10" fill="none" stroke="#111" stroke-width="1.8"/></svg>
<svg style="position:absolute;left:804px;top:505px" width="8" height="11" viewBox="0 0 8 11"><path d="M1.5 1 L6 5.5 L1.5 10" fill="none" stroke="#111" stroke-width="1.8"/></svg>
<div style="position:absolute;left:761px;top:83px;width:1px;height:442px;background:#c8c8c8;"></div>
<svg style="position:absolute;left:770px;top:87px" width="18" height="6" viewBox="0 0 18 6"><rect x="0" y="0" width="1" height="1" fill="#b8b8b8"/><rect x="3" y="0" width="1" height="1" fill="#b8b8b8"/><rect x="6" y="0" width="1" height="1" fill="#b8b8b8"/><rect x="9" y="0" width="1" height="1" fill="#b8b8b8"/><rect x="12" y="0" width="1" height="1" fill="#b8b8b8"/><rect x="15" y="0" width="1" height="1" fill="#b8b8b8"/><rect x="0" y="3" width="1" height="1" fill="#b8b8b8"/><rect x="3" y="3" width="1" height="1" fill="#b8b8b8"/><rect x="6" y="3" width="1" height="1" fill="#b8b8b8"/><rect x="9" y="3" width="1" height="1" fill="#b8b8b8"/><rect x="12" y="3" width="1" height="1" fill="#b8b8b8"/><rect x="15" y="3" width="1" height="1" fill="#b8b8b8"/></svg>
<svg style="position:absolute;left:800px;top:87px" width="18" height="6" viewBox="0 0 18 6"><rect x="0" y="0" width="1" height="1" fill="#b8b8b8"/><rect x="3" y="0" width="1" height="1" fill="#b8b8b8"/><rect x="6" y="0" width="1" height="1" fill="#b8b8b8"/><rect x="9" y="0" width="1" height="1" fill="#b8b8b8"/><rect x="12" y="0" width="1" height="1" fill="#b8b8b8"/><rect x="15" y="0" width="1" height="1" fill="#b8b8b8"/><rect x="0" y="3" width="1" height="1" fill="#b8b8b8"/><rect x="3" y="3" width="1" height="1" fill="#b8b8b8"/><rect x="6" y="3" width="1" height="1" fill="#b8b8b8"/><rect x="9" y="3" width="1" height="1" fill="#b8b8b8"/><rect x="12" y="3" width="1" height="1" fill="#b8b8b8"/><rect x="15" y="3" width="1" height="1" fill="#b8b8b8"/></svg>
<svg style="position:absolute;left:756px;top:281px" width="6" height="30" viewBox="0 0 6 30"><rect x="0" y="0" width="1" height="1" fill="#b8b8b8"/><rect x="3" y="0" width="1" height="1" fill="#b8b8b8"/><rect x="0" y="3" width="1" height="1" fill="#b8b8b8"/><rect x="3" y="3" width="1" height="1" fill="#b8b8b8"/><rect x="0" y="6" width="1" height="1" fill="#b8b8b8"/><rect x="3" y="6" width="1" height="1" fill="#b8b8b8"/><rect x="0" y="9" width="1" height="1" fill="#b8b8b8"/><rect x="3" y="9" width="1" height="1" fill="#b8b8b8"/><rect x="0" y="12" width="1" height="1" fill="#b8b8b8"/><rect x="3" y="12" width="1" height="1" fill="#b8b8b8"/><rect x="0" y="15" width="1" height="1" fill="#b8b8b8"/><rect x="3" y="15" width="1" height="1" fill="#b8b8b8"/><rect x="0" y="18" width="1" height="1" fill="#b8b8b8"/><rect x="3" y="18" width="1" height="1" fill="#b8b8b8"/><rect x="0" y="21" width="1" height="1" fill="#b8b8b8"/><rect x="3" y="21" width="1" height="1" fill="#b8b8b8"/><rect x="0" y="24" width="1" height="1" fill="#b8b8b8"/><rect x="3" y="24" width="1" height="1" fill="#b8b8b8"/><rect x="0" y="27" width="1" height="1" fill="#b8b8b8"/><rect x="3" y="27" width="1" height="1" fill="#b8b8b8"/></svg>
<svg style="position:absolute;left:771px;top:100px" width="14" height="16" viewBox="0 0 14 16"><path d="M0.5 0.5 H8.5 L13.5 5.5 V15.5 H0.5 Z" fill="#fafafa" stroke="#6a6a6a"/><path d="M8.5 0.5 V5.5 H13.5" fill="#e4e4e4" stroke="#6a6a6a"/></svg>
<svg style="position:absolute;left:770px;top:127px" width="16" height="16" viewBox="0 0 16 16"><path d="M0.5 2 H6 L7.5 3.5 H14.5 V15 H0.5 Z" fill="#c8c89a" stroke="#6b6b4a"/><path d="M1.5 7 H15.5 V15 H0.5 Z" fill="#dcdcb0" stroke="#6b6b4a"/></svg>
<svg style="position:absolute;left:770px;top:156px" width="16" height="16" viewBox="0 0 16 16"><rect x="0.5" y="0.5" width="15" height="15" rx="1.5" fill="#2a5aa8" stroke="#1a3a78"/><rect x="2.5" y="0.5" width="11" height="6" fill="#f4f4f4"/><rect x="2.5" y="0.5" width="11" height="2" fill="#e03030"/><rect x="4" y="9.5" width="8" height="6" fill="#d8d8d8"/><rect x="5" y="10.5" width="2" height="4" fill="#333"/></svg>
<svg style="position:absolute;left:770px;top:184px" width="16" height="16" viewBox="0 0 16 16"><rect x="3.5" y="0.5" width="9" height="7" fill="#fff" stroke="#555"/><rect x="0.5" y="6.5" width="15" height="7" rx="1.5" fill="#d6d6d6" stroke="#555"/><rect x="2.5" y="12.5" width="11" height="3" fill="#bdbdbd" stroke="#555"/><path d="M5 3 H11 M5 5 H11" stroke="#888" stroke-width="0.8"/></svg>
<div style="position:absolute;left:770px;top:212px;width:17px;height:1px;background:#d0d0d0;"></div>
<svg style="position:absolute;left:770px;top:223px" width="16" height="17" viewBox="0 0 16 17"><path d="M5.5 0.5 H11.5 L15.5 4.5 V16.5 H5.5 Z" fill="#fafafa" stroke="#111"/><path d="M0 8.5 H9" stroke="#000" stroke-width="1.4"/><path d="M7 5.5 L10.5 8.5 L7 11.5 Z" fill="#000"/></svg>
<svg style="position:absolute;left:770px;top:252px" width="16" height="17" viewBox="0 0 16 17"><path d="M0.5 0.5 H6.5 L10.5 4.5 V16.5 H0.5 Z" fill="#fafafa" stroke="#111"/><path d="M5 9.5 H14" stroke="#000" stroke-width="1.4"/><path d="M12.5 6.5 L16 9.5 L12.5 12.5 Z" fill="#000"/></svg>
<div style="position:absolute;left:770px;top:279px;width:17px;height:1px;background:#d0d0d0;"></div>
<svg style="position:absolute;left:770px;top:292px" width="16" height="16" viewBox="0 0 16 16"><path d="M6 1 L0.8 6 L6 11 L6 8.5 Q12 8 12 12 Q13 14 11 15.5 Q16 14 15.5 10 Q15 4.5 6 4.5 Z" fill="#f2d030" stroke="#b89a10" stroke-width="0.8"/></svg>
<svg style="position:absolute;left:770px;top:321px" width="16" height="16" viewBox="0 0 16 16"><path d="M10 1 L15.2 6 L10 11 L10 8.5 Q4 8 4 12 Q3 14 5 15.5 Q0 14 0.5 10 Q1 4.5 10 4.5 Z" fill="#dcdcdc" stroke="#c8c8c8" stroke-width="0.8"/></svg>
<div style="position:absolute;left:770px;top:347px;width:17px;height:1px;background:#d0d0d0;"></div>
<svg style="position:absolute;left:770px;top:359px" width="16" height="17" viewBox="0 0 16 17"><path d="M0.5 0.5 H9 L11 2.5 V11.5 H0.5 Z" fill="#f6f6f6" stroke="#999"/><path d="M4.5 4.5 H12.5 L15.5 7.5 V16.5 H4.5 Z" fill="#fbfbfb" stroke="#888"/><path d="M6.5 8.5 H13 M6.5 10.5 H13 M6.5 12.5 H13 M6.5 14.5 H11" stroke="#999" stroke-width="0.8"/></svg>
<svg style="position:absolute;left:769px;top:387px" width="17" height="17" viewBox="0 0 17 17"><path d="M3.5 0.5 L11 10 M13.5 0.5 L6 10" stroke="#7a7a7a" stroke-width="1.6"/><path d="M3.5 0.5 L11 10 M13.5 0.5 L6 10" stroke="#c8c8c8" stroke-width="0.6"/><rect x="0.8" y="9.5" width="6.5" height="6.5" rx="2" fill="#d98c20" stroke="#6a3a08"/><rect x="9.7" y="9.5" width="6.5" height="6.5" rx="2" fill="#d98c20" stroke="#6a3a08"/><circle cx="4" cy="12.8" r="1.3" fill="#fff"/><circle cx="13" cy="12.8" r="1.3" fill="#fff"/></svg>
<svg style="position:absolute;left:770px;top:416px" width="16" height="17" viewBox="0 0 16 17"><rect x="0.7" y="1.7" width="14.6" height="14.6" rx="2" fill="#c87818" stroke="#6a3a08"/><rect x="3" y="4" width="10" height="10.5" fill="#fafafa" stroke="#666" stroke-width="0.6"/><rect x="5" y="0.5" width="6" height="3.5" rx="1" fill="#e8e8e8" stroke="#444" stroke-width="0.8"/><path d="M5 7 H11 M5 9 H11 M5 11 H9" stroke="#888" stroke-width="0.8"/></svg>
<div style="position:absolute;left:770px;top:443px;width:17px;height:1px;background:#d0d0d0;"></div>
<svg style="position:absolute;left:770px;top:455px" width="17" height="17" viewBox="0 0 17 17"><circle cx="7" cy="7" r="6.2" fill="#dbe8f5" stroke="#222" stroke-width="1.4"/><rect x="3.5" y="4" width="7" height="6" fill="none" stroke="#000" stroke-width="1" stroke-dasharray="1,1"/><path d="M11.5 11.5 L15.5 15.5" stroke="#111" stroke-width="2.3" stroke-linecap="round"/></svg>
<div style="position:absolute;left:795px;top:95px;width:26px;height:26px;box-sizing:border-box;border:1px solid #7e7e7e;border-radius:4px;background:linear-gradient(#dedede,#c9c9c9);"></div>
<svg style="position:absolute;left:800px;top:100px" width="16" height="16" viewBox="0 0 16 16"><path d="M3 3 L12 11" stroke="#000" stroke-width="1.5"/><path d="M12.8 12 L8.3 10.8 L11 8 Z" fill="#000"/><rect x="0.8" y="0.8" width="4" height="4" transform="rotate(45 2.8 2.8)" fill="#9999ff" stroke="#1818e8" stroke-width="1.1"/><rect x="11" y="11" width="4" height="4" transform="rotate(45 13 13)" fill="#99bbff" stroke="#1e8a1e" stroke-width="1.1"/></svg>
<div style="position:absolute;left:800px;top:128px;width:17px;height:1px;background:#d0d0d0;"></div>
<svg style="position:absolute;left:800px;top:139px" width="16" height="17" viewBox="0 0 16 17"><path d="M4 4 H15" stroke="#333" stroke-width="1" stroke-dasharray="1.5,1"/><path d="M4 4 V16" stroke="#333" stroke-width="1" stroke-dasharray="1.5,1"/><rect x="2" y="2" width="4" height="4" transform="rotate(45 4 4)" fill="#9999ff" stroke="#1818e8" stroke-width="1.1"/></svg>
<svg style="position:absolute;left:800px;top:168px" width="16" height="16" viewBox="0 0 16 16"><path d="M1 15 H14 V1" stroke="#c4c4c4" stroke-width="1" fill="none" stroke-dasharray="1.5,1"/></svg>
<svg style="position:absolute;left:800px;top:195px" width="16" height="17" viewBox="0 0 16 17"><path d="M1 14 H14 V1" stroke="#c4c4c4" stroke-width="1" fill="none" stroke-dasharray="1.5,1"/><circle cx="14" cy="14" r="1.8" fill="#ddd" stroke="#c4c4c4"/></svg>
<svg style="position:absolute;left:800px;top:223px" width="16" height="17" viewBox="0 0 16 17"><path d="M1 15 H14 V1" stroke="#c4c4c4" stroke-width="1" fill="none" stroke-dasharray="1.5,1"/><circle cx="14" cy="9" r="1.8" fill="#ddd" stroke="#c4c4c4"/></svg>
<svg style="position:absolute;left:800px;top:252px" width="16" height="14" viewBox="0 0 16 14"><path d="M1 13 H14 V1" stroke="#c4c4c4" stroke-width="1" fill="none" stroke-dasharray="1.5,1"/><circle cx="5" cy="5" r="1.6" fill="none" stroke="#bbb"/></svg>
<div style="position:absolute;left:800px;top:279px;width:17px;height:1px;background:#d0d0d0;"></div>
<div style="position:absolute;left:795px;top:287px;width:26px;height:26px;box-sizing:border-box;border:1px solid #7e7e7e;border-radius:4px;background:linear-gradient(#dedede,#c9c9c9);"></div>
<svg style="position:absolute;left:795px;top:287px" width="26" height="26" viewBox="0 0 26 26"><path d="M5.5 15 Q8 10 11.5 10 Q10.5 14 12.5 17 Q15 19.5 22 20.5" stroke="#555" stroke-width="1.1" fill="none"/><rect x="10.2" y="6.5" width="5" height="5" transform="rotate(45 12.7 9)" fill="#5a5aff" stroke="#1515e0" stroke-width="1"/></svg>
<svg style="position:absolute;left:800px;top:320px" width="17" height="16" viewBox="0 0 17 16"><path d="M1 2 Q7 3 9 7 Q10.5 10 8.5 14" stroke="#1a8a1a" stroke-width="1.5" fill="none"/><path d="M14.5 10 Q12.5 14 8 14.5" stroke="#1a8a1a" stroke-width="1.5" fill="none"/></svg>
<svg style="position:absolute;left:800px;top:349px" width="16" height="15" viewBox="0 0 16 15"><path d="M1 14 L15 1 M1 9 L15 5" stroke="#c4c4c4" stroke-width="1" fill="none"/><circle cx="8" cy="7.5" r="2" fill="none" stroke="#c4c4c4"/></svg>
<svg style="position:absolute;left:800px;top:376px" width="16" height="16" viewBox="0 0 16 16"><path d="M1 2 Q10 1 10 10 Q11 14 15 8" stroke="#555" stroke-width="1.2" fill="none"/><circle cx="10" cy="11" r="2.3" fill="#3c9a3c" stroke="#1a4a1a" stroke-width="0.7"/><circle cx="10" cy="11" r="0.9" fill="#6a6aff"/></svg>
<svg style="position:absolute;left:800px;top:403px" width="16" height="15" viewBox="0 0 16 15"><path d="M1 4 Q5 1 8 4 Q10 10 15 14" stroke="#555" stroke-width="1.2" fill="none"/><path d="M6 2 Q9 6 10 12" stroke="#555" stroke-width="1.1" fill="none"/><circle cx="8" cy="5" r="2.3" fill="#3c9a3c" stroke="#1a4a1a" stroke-width="0.7"/><circle cx="8" cy="5" r="0.9" fill="#6a6aff"/></svg>
<svg style="position:absolute;left:800px;top:432px" width="16" height="16" viewBox="0 0 16 16"><path d="M1 15 L15 1" stroke="#d02020" stroke-width="1.3" stroke-dasharray="2,1.5"/><path d="M2 10 L5 14 M4 9 L7 12 M10 3 L13 6 M11 1 L14 5" stroke="#d02020" stroke-width="1.1"/><circle cx="8" cy="8" r="2" fill="#3c9a3c" stroke="#1a4a1a" stroke-width="0.6"/></svg>
<svg style="position:absolute;left:800px;top:460px" width="16" height="15" viewBox="0 0 16 15"><path d="M1 13.5 H14 V1" stroke="#333" stroke-width="1" fill="none"/><circle cx="6" cy="7" r="2" fill="#3c9a3c" stroke="#1a4a1a" stroke-width="0.6"/></svg>
<div style="position:absolute;left:0px;top:525px;width:807px;height:21px;background:#c0c0c0;"></div>
<svg style="position:absolute;left:0px;top:0px" width="823" height="592" viewBox="0 0 823 592"><rect x="1" y="526" width="19" height="19" fill="#fff"/><path d="M1.5 526.5 L19.5 544.5 M19.5 526.5 L1.5 544.5" stroke="#7a0000" stroke-width="1.6"/><rect x="20" y="526" width="19" height="19" fill="#000000"/><rect x="39" y="526" width="19" height="19" fill="#1a1a1a"/><rect x="58" y="526" width="19" height="19" fill="#333333"/><rect x="77" y="526" width="19" height="19" fill="#4d4d4d"/><rect x="96" y="526" width="19" height="19" fill="#666666"/><rect x="115" y="526" width="19" height="19" fill="#808080"/><rect x="134" y="526" width="19" height="19" fill="#999999"/><rect x="153" y="526" width="19" height="19" fill="#b3b3b3"/><rect x="172" y="526" width="19" height="19" fill="#cccccc"/><rect x="191" y="526" width="19" height="19" fill="#e6e6e6"/><rect x="210" y="526" width="19" height="19" fill="#ececec"/><rect x="229" y="526" width="19" height="19" fill="#f2f2f2"/><rect x="248" y="526" width="19" height="19" fill="#f9f9f9"/><rect x="267" y="526" width="19" height="19" fill="#ffffff"/><rect x="286" y="526" width="19" height="19" fill="#800000"/><rect x="305" y="526" width="19" height="19" fill="#ff0000"/><rect x="324" y="526" width="19" height="19" fill="#808000"/><rect x="343" y="526" width="19" height="19" fill="#ffff00"/><rect x="362" y="526" width="19" height="19" fill="#008000"/><rect x="381" y="526" width="19" height="19" fill="#00ff00"/><rect x="400" y="526" width="19" height="19" fill="#008080"/><rect x="419" y="526" width="19" height="19" fill="#00ffff"/><rect x="438" y="526" width="19" height="19" fill="#000080"/><rect x="457" y="526" width="19" height="19" fill="#0000ff"/><rect x="476" y="526" width="19" height="19" fill="#800080"/><rect x="495" y="526" width="19" height="19" fill="#ff00ff"/><rect x="514" y="526" width="19" height="19" fill="#2b0000"/><rect x="533" y="526" width="19" height="19" fill="#550000"/><rect x="552" y="526" width="19" height="19" fill="#800000"/><rect x="571" y="526" width="19" height="19" fill="#aa0000"/><rect x="590" y="526" width="19" height="19" fill="#d40000"/><rect x="609" y="526" width="19" height="19" fill="#ff0000"/><rect x="628" y="526" width="19" height="19" fill="#ff2a2a"/><rect x="647" y="526" width="19" height="19" fill="#ff5555"/><rect x="666" y="526" width="19" height="19" fill="#ff8080"/><rect x="685" y="526" width="19" height="19" fill="#ffaaaa"/><rect x="704" y="526" width="19" height="19" fill="#ffd5d5"/><rect x="723" y="526" width="19" height="19" fill="#280b0b"/><rect x="742" y="526" width="19" height="19" fill="#501616"/><rect x="761" y="526" width="19" height="19" fill="#782121"/><rect x="780" y="526" width="19" height="19" fill="#a02c2c"/><rect x="799" y="526" width="7" height="19" fill="#c83737"/></svg>
<svg style="position:absolute;left:810.5px;top:527px" width="8" height="11" viewBox="0 0 8 11"><path d="M6.5 1 L2 5.5 L6.5 10" fill="none" stroke="#111" stroke-width="1.8"/></svg>
<div style="position:absolute;left:0px;top:549px;width:807px;height:15px;box-sizing:border-box;border:1px solid #c4c4c4;background:linear-gradient(#e6e6e6,#f8f8f8 40%,#ffffff 60%,#ededed);"></div>
<div style="position:absolute;left:16px;top:550px;width:775px;height:13px;border-radius:7.5px;background:linear-gradient(#cfcfcf,#ececec 35%,#fbfbfb 60%,#e2e2e2);box-shadow:inset 4px 0 4px -2px rgba(0,0,0,0.22), inset -4px 0 4px -2px rgba(0,0,0,0.22);"></div>
<svg style="position:absolute;left:5px;top:553.0px" width="6" height="7" viewBox="0 0 6 7"><path d="M0 3.5 L6 0 L6 7 Z" fill="#333"/></svg>
<svg style="position:absolute;left:796px;top:553.0px" width="6" height="7" viewBox="0 0 6 7"><path d="M6 3.5 L0 0 L0 7 Z" fill="#333"/></svg>
<div style="position:absolute;left:16px;top:550px;width:74px;height:13px;box-sizing:border-box;border:1px solid #0d3aa0;border-radius:6.5px;background:linear-gradient(#3a6cc8 0%,#9cc0f0 20%,#84b0ec 40%,#3e88e8 56%,#58b0f6 78%,#9ad8ff 92%,#3c70cc 100%);box-shadow:inset 3px 0 3px -1px rgba(0,40,160,0.55), inset -3px 0 3px -1px rgba(0,40,160,0.55);"></div>
<div style="position:absolute;left:22.5px;top:552px;width:61px;height:3px;background:rgba(255,255,255,0.28);border-radius:2px;"></div>
<div style="position:absolute;left:0px;top:563px;width:823px;height:1px;background:#e0e0e0;"></div>
<div id="t53" class="t" style="left:1.10px;top:571.06px;font-size:10.8px;font-weight:400;color:#111;font-family:'Liberation Sans', sans-serif;transform:scaleX(1.2000);">Fill:</div>
<div id="t54" class="t" style="left:1.42px;top:583.76px;font-size:10.8px;font-weight:400;color:#111;font-family:'Liberation Sans', sans-serif;transform:scaleX(1.1603);">Stroke:</div>
<div id="t55" class="t" style="left:45.06px;top:571.19px;font-size:11px;font-weight:700;color:#000;font-family:'Liberation Sans', sans-serif;transform:scaleX(0.9667);">a</div>
<div style="position:absolute;left:52px;top:565px;width:77px;height:13px;background:#7f3f3f;"></div>
<div id="t56" class="t" style="left:51.60px;top:583.76px;font-size:10.8px;font-weight:400;color:#111;font-family:'Liberation Sans', sans-serif;transform:scaleX(1.1969);">Different 1.14</div>
<div id="t57" class="t" style="left:131.17px;top:578.19px;font-size:11px;font-weight:400;color:#111;font-family:'Liberation Sans', sans-serif;transform:scaleX(1.0537);">O:</div>
<div style="position:absolute;left:143px;top:568px;width:36px;height:21px;box-sizing:border-box;border:1px solid #9a9a9a;border-radius:3px;background:#fff;"></div>
<div style="position:absolute;left:166px;top:569px;width:12px;height:19px;background:linear-gradient(#f7f7f7,#e4e4e4);border-left:1px solid #a8a8a8;border-radius:0 2px 2px 0;"></div>
<div style="position:absolute;left:167px;top:578px;width:10px;height:1px;background:#c8c8c8;"></div>
<svg style="position:absolute;left:168px;top:571px" width="8" height="5" viewBox="0 0 8 5"><path d="M1.5 3.5 L4 1 L6.5 3.5" fill="none" stroke="#555" stroke-width="1.1"/></svg>
<svg style="position:absolute;left:168px;top:580px" width="8" height="5" viewBox="0 0 8 5"><path d="M1.5 1 L4 3.5 L6.5 1" fill="none" stroke="#555" stroke-width="1.1"/></svg>
<div style="position:absolute;left:144px;top:568px;width:22px;height:21px;overflow:hidden;">
<div id="t58" class="t" style="left:2.08px;top:11.02px;font-size:11.5px;font-weight:400;color:#000;font-family:'Liberation Sans', sans-serif;transform:scaleX(1.2222);">100</div>
</div>
<div style="position:absolute;left:180px;top:565px;width:1px;height:27px;background:#d0d0d0;"></div>
<svg style="position:absolute;left:185px;top:569px" width="18" height="16" viewBox="0 0 18 16"><path d="M1 10 Q9 0.6 16.6 10 Q9 19.2 1 10 Z" fill="#fff" stroke="#000" stroke-width="1.1"/><circle cx="9.2" cy="9.8" r="3.2" fill="#000"/><circle cx="8.1" cy="8.7" r="0.9" fill="#fff"/><path d="M3 8 L1.3 5.5 M5.6 6.3 L4.6 2.5 M9.3 5.6 L9.3 1.2 M12.9 6.3 L14 3 M15.3 8 L17 5.5" stroke="#000" stroke-width="1.1"/></svg>
<svg style="position:absolute;left:211px;top:569px" width="15" height="18" viewBox="0 0 15 18"><defs><linearGradient id="lkg" x1="0" y1="0" x2="1" y2="1"><stop offset="0" stop-color="#fbf3c0"/><stop offset="1" stop-color="#e8c830"/></linearGradient></defs><path d="M3.3 3.2 Q6 0.6 9.5 2.6 Q11.7 4.5 11.6 7.6" fill="none" stroke="#111" stroke-width="1.3"/><path d="M1.6 8.9 L11.8 6.9 L13.2 14.6 L3 16.7 Z" fill="url(#lkg)" stroke="#111" stroke-width="1.2"/><path d="M7.6 10.6 L8.6 10.4 L9 13 L8.2 13.2 Z" fill="#111"/></svg>
<div style="position:absolute;left:231px;top:566px;width:113px;height:25px;box-sizing:border-box;border:1px solid #a0a0a0;border-radius:4px;background:linear-gradient(#fafafa,#e8e8e8);"></div>
<div style="position:absolute;left:322px;top:570px;width:1px;height:17px;background:#c8c8c8;"></div>
<svg style="position:absolute;left:327px;top:571px" width="10" height="14" viewBox="0 0 10 14"><path d="M1.5 5 L5 1.5 L8.5 5 M1.5 9 L5 12.5 L8.5 9" fill="none" stroke="#222" stroke-width="1.4"/></svg>
<div id="t59" class="t" style="left:238.72px;top:577.71px;font-size:11.8px;font-weight:700;color:#111;font-family:'Liberation Sans', sans-serif;transform:scaleX(1.1333);">•Layer 1</div>
<div id="t60" class="t" style="left:348.78px;top:578.50px;font-size:13px;font-weight:700;color:#111;font-family:'Liberation Sans', sans-serif;transform:scaleX(1.4400);">2</div>
<div id="t61" class="t" style="left:363.23px;top:578.63px;font-size:12.6px;font-weight:400;color:#111;font-family:'Liberation Sans', sans-serif;transform:scaleX(1.1445);">objects of types</div>
<div id="t62" class="t" style="left:467.62px;top:578.63px;font-size:12.6px;font-weight:700;color:#111;font-family:'Liberation Sans', sans-serif;transform:scaleX(1.1696);">Ellipse</div>
<div id="t63" class="t" style="left:514.00px;top:578.63px;font-size:12.6px;font-weight:400;color:#111;font-family:'Liberation Sans', sans-serif;transform:scaleX(2.4000);">,</div>
<div id="t64" class="t" style="left:524.40px;top:578.63px;font-size:12.6px;font-weight:700;color:#111;font-family:'Liberation Sans', sans-serif;transform:scaleX(1.1475);">Text</div>
<div id="t65" class="t" style="left:557.55px;top:578.63px;font-size:12.6px;font-weight:400;color:#111;font-family:'Liberation Sans', sans-serif;transform:scaleX(1.1321);">in layer</div>
<div id="t66" class="t" style="left:607.29px;top:578.63px;font-size:12.6px;font-weight:700;color:#111;font-family:'Liberation Sans', sans-serif;transform:scaleX(1.2154);">Layer .</div>
<div style="position:absolute;left:658px;top:565px;width:1px;height:27px;background:#d0d0d0;"></div>
<div id="t67" class="t" style="left:660.24px;top:571.06px;font-size:10.5px;font-weight:400;color:#111;font-family:'Liberation Sans', sans-serif;transform:scaleX(1.0286);">X:</div>
<div id="t68" class="t" style="left:660.23px;top:584.06px;font-size:10.5px;font-weight:400;color:#111;font-family:'Liberation Sans', sans-serif;transform:scaleX(1.0909);">Y:</div>
<div id="t69" class="t" style="left:680.65px;top:571.06px;font-size:10.5px;font-weight:400;color:#111;font-family:'Liberation Mono', monospace;transform:scaleX(1.1370);">391.43</div>
<div id="t70" class="t" style="left:680.65px;top:584.06px;font-size:10.5px;font-weight:400;color:#111;font-family:'Liberation Mono', monospace;transform:scaleX(1.1370);">650.00</div>
<div id="t71" class="t" style="left:732.72px;top:577.79px;font-size:11px;font-weight:400;color:#111;font-family:'Liberation Sans', sans-serif;transform:scaleX(1.1176);">Z:</div>
<div style="position:absolute;left:748px;top:567px;width:55px;height:21px;box-sizing:border-box;border:1px solid #9a9a9a;border-radius:3px;background:#fff;"></div>
<div style="position:absolute;left:790px;top:568px;width:12px;height:19px;background:linear-gradient(#f7f7f7,#e4e4e4);border-left:1px solid #a8a8a8;border-radius:0 2px 2px 0;"></div>
<div style="position:absolute;left:791px;top:577px;width:10px;height:1px;background:#c8c8c8;"></div>
<svg style="position:absolute;left:792px;top:570px" width="8" height="5" viewBox="0 0 8 5"><path d="M1.5 3.5 L4 1 L6.5 3.5" fill="none" stroke="#555" stroke-width="1.1"/></svg>
<svg style="position:absolute;left:792px;top:579px" width="8" height="5" viewBox="0 0 8 5"><path d="M1.5 1 L4 3.5 L6.5 1" fill="none" stroke="#555" stroke-width="1.1"/></svg>
<div style="position:absolute;left:749px;top:567px;width:41px;height:21px;overflow:hidden;">
<div id="t72" class="t" style="left:5.22px;top:11.02px;font-size:11.5px;font-weight:400;color:#000;font-family:'Liberation Sans', sans-serif;transform:scaleX(1.0442);">140%</div>
</div>
<div style="position:absolute;left:808px;top:577px;width:15px;height:15px;box-sizing:border-box;border-left:1px solid #d6d6d6;border-top:1px solid #d6d6d6;background:#f7f7f7;"></div>
<svg style="position:absolute;left:808px;top:577px" width="15" height="15" viewBox="0 0 15 15"><path d="M3 14.5 L14.5 3 M7.5 14.5 L14.5 7.5" stroke="#8a8a8a" stroke-width="0.9"/><path d="M4 14.5 L14.5 4 M8.5 14.5 L14.5 8.5" stroke="#fff" stroke-width="0.6"/></svg>
</body></html>
